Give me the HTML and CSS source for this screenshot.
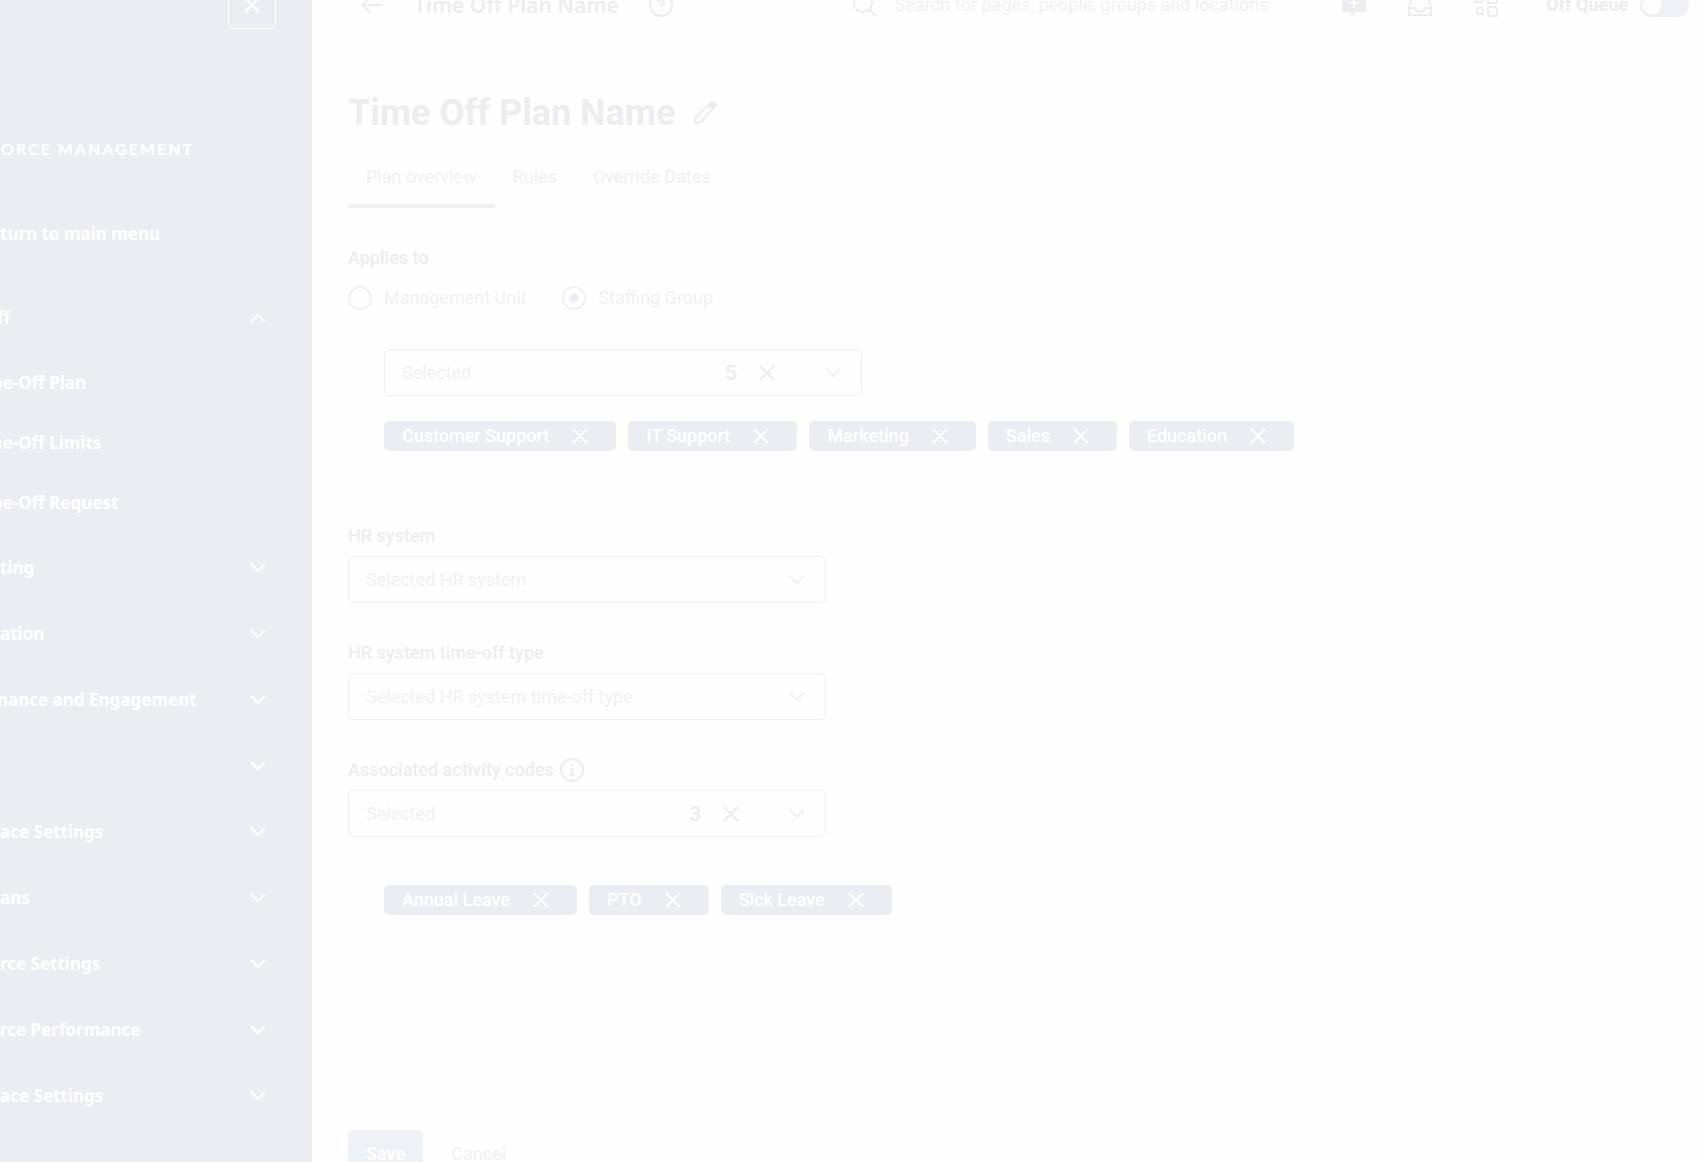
FILE: index.html
```html
<!DOCTYPE html>
<html lang="en">
<head>
<meta charset="utf-8">
<title>Time Off Plan Name</title>
<link rel="stylesheet" href="styles.css">
</head>
<body>
<svg class="defs" aria-hidden="true">
  <symbol id="x" viewBox="0 0 16 16"><path d="M1 1l14 14M15 1L1 15"/></symbol>
  <symbol id="down" viewBox="0 0 16 16"><path d="M1 4l7 7 7-7"/></symbol>
  <symbol id="up" viewBox="0 0 16 16"><path d="M1 12l7-7 7 7"/></symbol>
</svg>
<div class="app">
  <nav class="sidebar" aria-label="Menu">
    <div class="side-top"><button class="close" aria-label="Close menu"><svg class="icon"><use href="#x"/></svg></button></div>
    <h2 class="side-title">ORCE MANAGEMENT</h2>
    <a class="return" href="#">turn to main menu</a>
    <button class="row"><span class="cut">ff</span><svg class="icon"><use href="#up"/></svg></button>
    <div class="sub">
      <a href="#"><span class="cut-wide">me-Off Plan</span></a>
      <a href="#"><span class="cut-wide">me-Off Limits</span></a>
      <a href="#"><span class="cut-wide">me-Off Request</span></a>
    </div>
    <button class="row"><span>ting</span><svg class="icon"><use href="#down"/></svg></button>
    <button class="row"><span>ation</span><svg class="icon"><use href="#down"/></svg></button>
    <button class="row"><span class="cut">nance and Engagement</span><svg class="icon"><use href="#down"/></svg></button>
    <button class="row" aria-label="Expand"><span></span><svg class="icon"><use href="#down"/></svg></button>
    <button class="row"><span>ace Settings</span><svg class="icon"><use href="#down"/></svg></button>
    <button class="row"><span>ans</span><svg class="icon"><use href="#down"/></svg></button>
    <button class="row"><span>rce Settings</span><svg class="icon"><use href="#down"/></svg></button>
    <button class="row"><span>rce Performance</span><svg class="icon"><use href="#down"/></svg></button>
    <button class="row"><span>ace Settings</span><svg class="icon"><use href="#down"/></svg></button>
  </nav>
  <main class="main">
    <header class="topbar">
      <button class="plain" aria-label="Back"><svg class="icon24" viewBox="0 0 24 24"><path d="M23 12H2M11 4l-9 8 9 8"/></svg></button>
      <span class="crumb">Time Off Plan Name</span>
      <button class="plain" aria-label="Help"><svg class="icon24" viewBox="0 0 24 24"><circle cx="12" cy="12" r="11"/><path d="M9 9.500c0-4 6-4 6-.5 0 2.500-3 2-3 5M12 16.500v1.500"/></svg></button>
      <label class="search"><svg class="icon24" viewBox="0 0 24 24"><circle cx="10" cy="10" r="9"/><path d="M16.500 16.500L23 23"/></svg><input type="text" aria-label="Search" placeholder="Search for pages, people, groups and locations"></label>
      <div class="tools">
        <button class="plain" aria-label="New message"><svg class="icon24" viewBox="0 0 24 24"><path class="fill" d="M2 1h20a2 2 0 0 1 2 2v14a2 2 0 0 1-2 2h-8l-5 5v-5H2a2 2 0 0 1-2-2V3a2 2 0 0 1 2-2z"/><path class="plus" d="M12 5v10M7 10h10"/></svg></button>
        <button class="plain" aria-label="Inbox"><svg class="icon24" viewBox="0 0 24 24"><path d="M1 14L5 2h14l4 12v8H1zM1 15h6c1 5 9 5 10 0h6"/></svg></button>
        <button class="plain" aria-label="Apps"><svg class="icon24" viewBox="0 0 24 24"><rect x="1" y="1" width="8" height="8" rx="1"/><rect x="14" y="1" width="9" height="9" rx="1"/><rect x="3" y="15" width="6" height="6" rx="1"/><rect x="14" y="14" width="9" height="9" rx="1"/></svg></button>
        <label class="queue">Off Queue<input type="checkbox" role="switch"></label>
      </div>
    </header>
    <form class="content">
      <div class="heading"><h1>Time Off Plan Name</h1><button type="button" class="plain" aria-label="Edit name"><svg class="icon24" viewBox="0 0 24 24"><path d="M1.500 22.500l1-6L17 2.500q2-2 4 0t0 4.500L7.500 21z"/><path class="fill" d="M14.500 4.500L18 1q2-1.500 4.500.5T23 6l-3.500 3.500z"/></svg></button></div>
      <div class="tabs"><a class="tab active" href="#">Plan overview</a><a class="tab" href="#">Rules</a><a class="tab" href="#">Override Dates</a></div>
      <fieldset class="applies">
        <legend>Applies to</legend>
        <div class="radios">
          <label><input type="radio" name="applies">Management Unit</label>
          <label><input type="radio" name="applies" checked>Staffing Group</label>
        </div>
      </fieldset>
      <div class="nested groups">
        <div class="select"><select aria-label="Staffing groups"><option>Selected</option></select><div class="adorn"><b>5</b><button type="button" class="plain strong" aria-label="Clear"><svg class="icon"><use href="#x"/></svg></button><svg class="icon chev"><use href="#down"/></svg></div></div>
        <div class="chips">
          <span class="chip">Customer Support<button type="button" class="plain" aria-label="Remove Customer Support"><svg class="icon"><use href="#x"/></svg></button></span>
          <span class="chip">IT Support<button type="button" class="plain" aria-label="Remove IT Support"><svg class="icon"><use href="#x"/></svg></button></span>
          <span class="chip">Marketing<button type="button" class="plain" aria-label="Remove Marketing"><svg class="icon"><use href="#x"/></svg></button></span>
          <span class="chip">Sales<button type="button" class="plain" aria-label="Remove Sales"><svg class="icon"><use href="#x"/></svg></button></span>
          <span class="chip">Education<button type="button" class="plain" aria-label="Remove Education"><svg class="icon"><use href="#x"/></svg></button></span>
        </div>
      </div>
      <div class="fields">
        <div class="field"><label for="hr">HR system</label><div class="select"><select id="hr"><option>Selected HR system</option></select><div class="adorn"><svg class="icon chev"><use href="#down"/></svg></div></div></div>
        <div class="field"><label for="type">HR system time-off type</label><div class="select"><select id="type"><option>Selected HR system time-off type</option></select><div class="adorn"><svg class="icon chev"><use href="#down"/></svg></div></div></div>
        <div class="field"><label for="codes">Associated activity codes <svg class="icon24" viewBox="0 0 24 24"><circle cx="12" cy="12" r="11"/><path d="M12 6v2M10 11h2v6M9.500 17h5"/></svg></label><div class="select"><select id="codes"><option>Selected</option></select><div class="adorn"><b>3</b><button type="button" class="plain strong" aria-label="Clear"><svg class="icon"><use href="#x"/></svg></button><svg class="icon chev"><use href="#down"/></svg></div></div></div>
      </div>
      <div class="nested chips codes">
        <span class="chip">Annual Leave<button type="button" class="plain" aria-label="Remove Annual Leave"><svg class="icon"><use href="#x"/></svg></button></span>
        <span class="chip">PTO<button type="button" class="plain" aria-label="Remove PTO"><svg class="icon"><use href="#x"/></svg></button></span>
        <span class="chip">Sick Leave<button type="button" class="plain" aria-label="Remove Sick Leave"><svg class="icon"><use href="#x"/></svg></button></span>
      </div>
      <div class="actions"><button type="button" class="save">Save</button><button type="button" class="cancel">Cancel</button></div>
    </form>
  </main>
</div>
</body>
</html>
```
FILE: styles.css
```css
* { box-sizing: border-box; }
body {
  margin: 0;
  height: 100vh;
  overflow: hidden;
  background: #fefefe;
  color: #ededf0;
  font: 18px/24px Roboto, "Liberation Sans", sans-serif;
}
button, input, select { font: inherit; color: inherit; }
button { background: none; border: 0; padding: 0; }
a { color: inherit; text-decoration: none; }
svg { fill: none; stroke: currentColor; stroke-width: 2; flex: none; display: block; }
.fill { fill: currentColor; stroke: none; }
.plus { stroke: #fefefe; }
.defs { display: none; }
.icon { width: 16px; height: 16px; }
.icon24 { width: 24px; height: 24px; }
.plain { display: flex; flex: none; }
.app { display: flex; min-height: 100vh; }

.sidebar {
  width: 312px;
  flex: none;
  background: #ecedf3;
  color: #fff;
  font: 700 17px/24px "Noto Sans", sans-serif;
  overflow: hidden;
}
.side-top { display: flex; justify-content: flex-end; padding-right: 36px; margin-top: -19px; }
.close { width: 48px; height: 48px; border: 1px solid #fff; border-radius: 5px; display: grid; place-items: center; }
.side-title { margin: 108px 0 0; padding-left: 1px; font: 700 16px/24px Lato, sans-serif; letter-spacing: 2px; white-space: nowrap; }
.return { display: block; margin: 61px 0 39px; }
.row { display: flex; align-items: center; justify-content: space-between; width: 100%; height: 66px; padding-right: 46px; font-weight: 700; text-align: left; white-space: nowrap; }
.sub { padding: 2px 0; }
.sub a { display: flex; align-items: center; height: 60px; }
.cut { margin-left: -3px; }
.cut-wide { margin-left: -14px; }

.main { flex: 1; min-width: 0; }
.topbar { display: flex; align-items: center; height: 60px; margin-top: -25px; padding: 0 11px 0 48px; }
.crumb { margin: 0 30px; font: 600 21px/30px "Noto Sans", sans-serif; white-space: nowrap; }
.search { display: flex; align-items: center; flex: 1; gap: 18px; margin-left: 180px; }
.search input { flex: 1; min-width: 0; border: 0; padding: 0; background: none; outline: 0; }
.search input::placeholder { color: #f1f1f4; opacity: 1; }
.tools { display: flex; align-items: center; gap: 42px; }
.queue { display: flex; align-items: center; gap: 12px; margin-left: 6px; font-weight: 700; white-space: nowrap; }
.queue input { appearance: none; width: 49px; height: 24px; margin: 0; border-radius: 12px; background: radial-gradient(circle at 12px 12px, #fefefe 9px, #eff0f5 10px); }

.content { padding: 54px 36px 0; }
.heading { display: flex; align-items: center; gap: 18px; height: 48px; }
h1 { margin: 0; font-size: 36px; line-height: 48px; font-weight: 700; }
.tabs { display: flex; margin-top: 19px; color: #f0f0f4; }
.tab { padding: 9px 18px 15px; border-bottom: 4px solid transparent; }
.active { border-color: #f0f0f5; }
fieldset { border: 0; margin: 38px 0 0; padding: 0; }
legend, .field label { padding: 0; font-weight: 500; }
.radios { display: flex; gap: 36px; padding-top: 16px; color: #f1f1f4; }
.radios label { display: flex; align-items: center; gap: 12px; }
.radios input { appearance: none; width: 24px; height: 24px; margin: 0; border: 2px solid #f0f0f5; border-radius: 50%; }
.radios input:checked { background: radial-gradient(circle, #ecedf4 4px, transparent 5px); }
.nested { margin-left: 36px; }
.groups { margin-top: 39px; }
.select { display: grid; align-items: center; max-width: 478px; height: 47px; border: 1px solid #f0f0f4; border-radius: 5px; }
.select select { grid-area: 1 / 1; appearance: none; width: 100%; height: 100%; padding: 0 17px; border: 0; background: none; color: #f1f1f4; }
.adorn { grid-area: 1 / 1; justify-self: end; display: flex; align-items: center; padding-right: 20px; pointer-events: none; }
.adorn b { font-size: 21px; margin-right: 22px; }
.strong { margin-right: 50px; }
.chev { color: #f1f1f5; }
.chips { display: flex; flex-wrap: wrap; gap: 12px; }
.groups .chips { margin-top: 25px; }
.chip { display: flex; align-items: center; gap: 23px; height: 30px; padding: 0 28px 0 18px; border-radius: 5px; background: #ecedf3; color: #fff; font-weight: 500; white-space: nowrap; }
.fields { display: grid; gap: 38px; margin-top: 73px; }
.field label { display: flex; align-items: center; gap: 6px; margin-bottom: 8px; }
.codes { margin-top: 48px; }
.actions { display: flex; gap: 28px; margin-top: 215px; }
.actions button { height: 48px; }
.save { padding: 0 18px; border-radius: 5px; background: linear-gradient(#eff1f5, #ebf2f8); color: #fff; font-weight: 700; }
.actions .cancel { color: #f1f1f4; }
```
